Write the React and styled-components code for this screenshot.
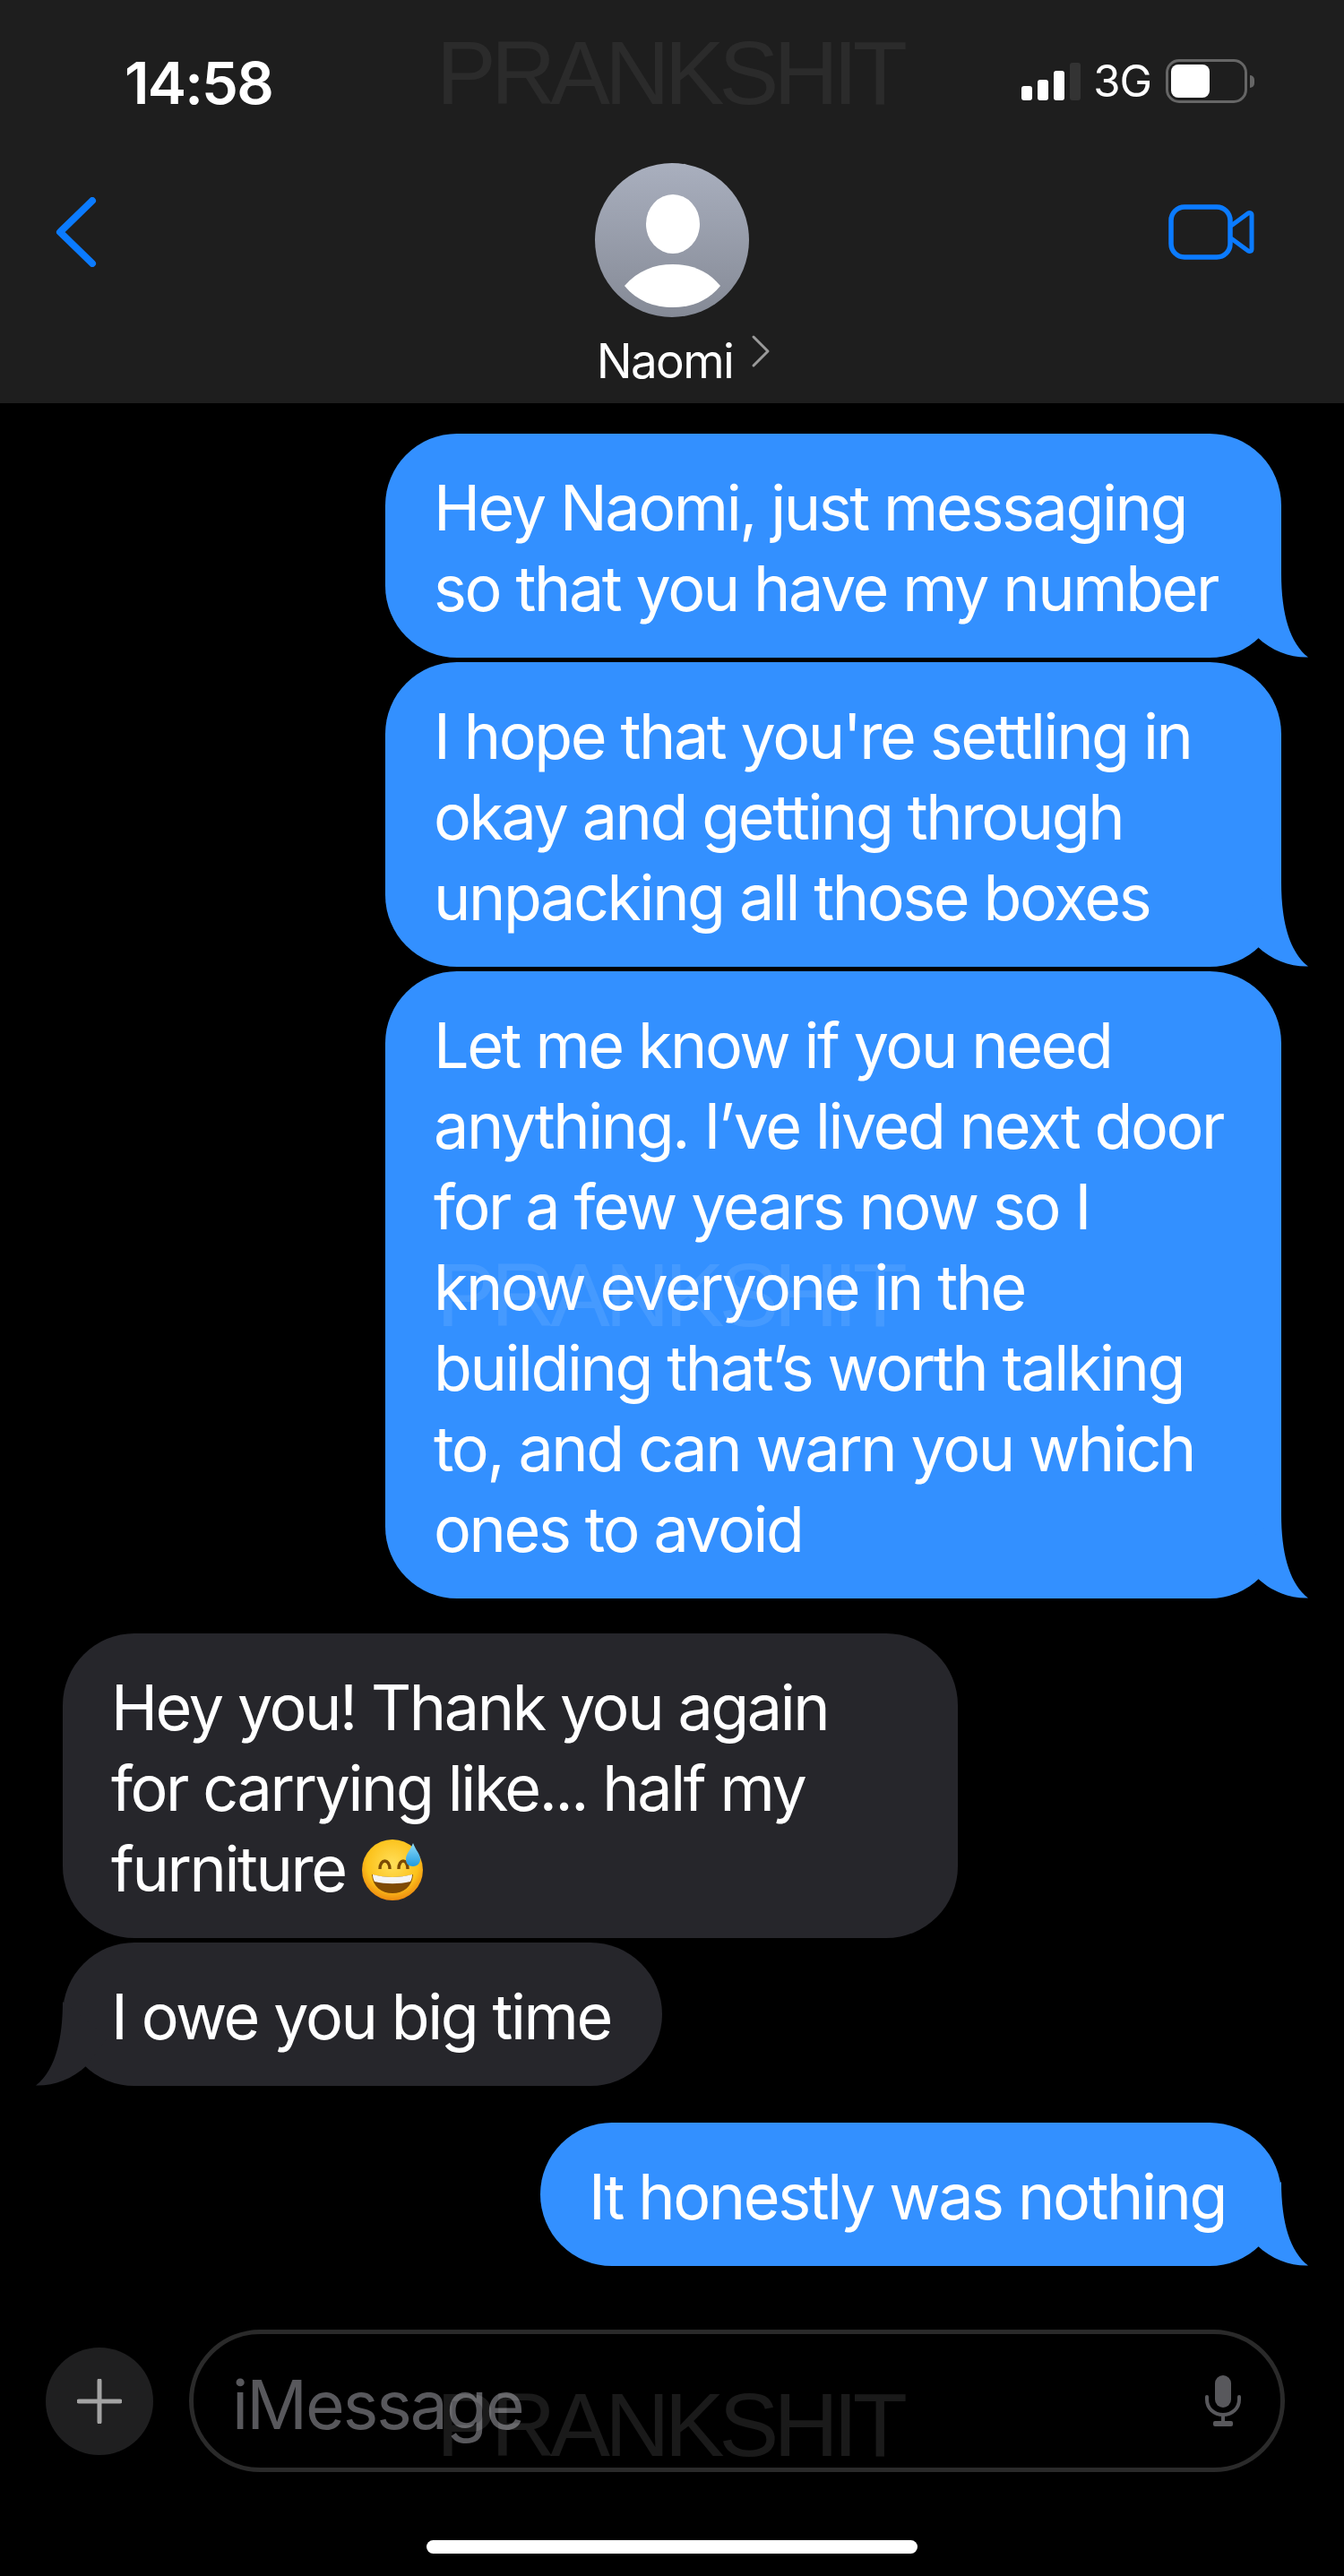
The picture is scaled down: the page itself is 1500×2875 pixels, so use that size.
import React from "react";
import styled, { createGlobalStyle } from "styled-components";

const SCGlobal = createGlobalStyle`
  html, body {
    margin: 0;
    padding: 0;
    background: #000;
  }
`;

const SCPhone = styled.div`
  position: relative;
  width: 1500px;
  height: 2875px;
  overflow: hidden;
  display: flex;
  flex-direction: column;
  background: #000;
  color: #fff;
  font-family: "Inter", "Liberation Sans", sans-serif;
`;

const SCHeader = styled.header`
  height: 450px;
  flex: none;
  box-sizing: border-box;
  background: #1e1e1e;
`;

const SCStatusRow = styled.div`
  display: flex;
  justify-content: space-between;
  align-items: center;
  height: 64px;
  padding: 60px 108px 0 139px;
`;

const SCTime = styled.span`
  font-size: 65px;
  font-weight: 600;
  letter-spacing: -1.8px;
`;

const SCStatusIcons = styled.div`
  display: flex;
  align-items: flex-end;
  margin-top: -3px;
`;

const SCSignal = styled.div`
  display: flex;
  align-items: flex-end;
  gap: 6px;
  height: 42px;
  margin-bottom: 3px;
`;

const SCSignalBar = styled.i`
  display: block;
  width: 12px;
  height: ${(p) => p.$height}px;
  border-radius: 3px;
  background: ${(p) => (p.$off ? "#333333" : "#ffffff")};
`;

const SCNetwork = styled.span`
  margin: 0 16px 0 14px;
  font-size: 49px;
  line-height: 48px;
  letter-spacing: -1px;
`;

const SCBattery = styled.div`
  position: relative;
  box-sizing: border-box;
  width: 91px;
  height: 49px;
  padding: 3px;
  border: 3px solid #666666;
  border-radius: 15px;

  &::after {
    content: "";
    position: absolute;
    right: -11px;
    top: 15px;
    width: 5px;
    height: 14px;
    border-radius: 0 7px 7px 0;
    background: #666666;
  }
`;

const SCBatteryFill = styled.div`
  width: 43px;
  height: 100%;
  border-radius: 8px;
  background: #fff;
`;

const SCNav = styled.nav`
  display: grid;
  grid-template-columns: 1fr auto 1fr;
  margin-top: 58px;
  padding: 0 100px 0 100px;
`;

const SCBack = styled.svg`
  display: block;
  margin: 38px 0 0 -38px;
`;

const SCVideo = styled.svg`
  display: block;
  justify-self: end;
  margin-top: 46px;
`;

const SCContact = styled.div`
  display: flex;
  flex-direction: column;
  align-items: center;
`;

const SCAvatar = styled.svg`
  display: block;
`;

const SCNameRow = styled.div`
  display: flex;
  align-items: flex-start;
  gap: 20px;
  margin: 17px 0 0 26px;
`;

const SCName = styled.span`
  font-size: 53px;
  line-height: 64px;
  letter-spacing: -1.6px;
`;

const SCNameChevron = styled.svg`
  display: block;
  margin-top: 2px;
`;

const SCThread = styled.main`
  display: flex;
  flex-direction: column;
  gap: 5px;
  padding-top: 34px;
`;

const SCBubble = styled.div`
  position: relative;
  box-sizing: border-box;
  align-self: ${(p) => (p.$sent ? "flex-end" : "flex-start")};
  width: ${(p) => p.$width}px;
  margin: ${(p) => p.$top || 0}px ${(p) => (p.$sent ? "70px" : "0")} 0
    ${(p) => (p.$sent ? "0" : "70px")};
  padding: 38px 54px 32px;
  border-radius: 80px;
  background: ${(p) => (p.$sent ? "#3390ff" : "#26262b")};
  font-size: 70px;
  line-height: 90px;
  letter-spacing: -2.4px;
  white-space: nowrap;
`;

const SCTail = styled.svg`
  position: absolute;
  bottom: 0;
  ${(p) => (p.$sent ? "right: -30px;" : "left: -30px; transform: scaleX(-1);")}
`;

const SCEmoji = styled.svg`
  display: inline-block;
  vertical-align: -10px;
  margin-left: 18px;
`;

const SCFooter = styled.footer`
  margin-top: auto;
  display: flex;
  flex-direction: column;
`;

const SCComposer = styled.div`
  display: flex;
  align-items: center;
  gap: 40px;
  padding-left: 51px;
`;

const SCPlus = styled.div`
  display: flex;
  align-items: center;
  justify-content: center;
  width: 120px;
  height: 120px;
  border-radius: 50%;
  background: #1f1f20;
  flex: none;
`;

const SCField = styled.div`
  display: flex;
  align-items: center;
  justify-content: space-between;
  box-sizing: border-box;
  width: 1223px;
  height: 159px;
  padding: 0 43px 0 43px;
  border: 5px solid #2a2a2a;
  border-radius: 80px;
`;

const SCPlaceholder = styled.span`
  padding-top: 8px;
  font-size: 75px;
  line-height: 90px;
  letter-spacing: -2px;
  color: #58585c;
`;

const SCHomeBar = styled.div`
  align-self: center;
  width: 548px;
  height: 15px;
  margin: 76px 0 25px;
  border-radius: 8px;
  background: #fff;
`;

const SCWatermarks = styled.div`
  position: absolute;
  inset: 0;
  pointer-events: none;
`;

const SCWatermark = styled.span`
  position: absolute;
  left: 487px;
  top: ${(p) => p.$top}px;
  font-family: "Liberation Sans", Arial, sans-serif;
  font-size: 100px;
  line-height: 100px;
  letter-spacing: -5.8px;
  color: rgba(255, 255, 255, ${(p) => p.$alpha});
`;

function Tail({ sent }) {
  return (
    <SCTail $sent={sent} width="80" height="94" viewBox="0 0 80 94">
      <path
        d="M50 0 C50 46 60 78 80 93.5 C60 94 40 87 23 71 L0 40 Z"
        fill={sent ? "#3390ff" : "#26262b"}
      />
    </SCTail>
  );
}

function Emoji() {
  return (
    <SCEmoji width="68" height="68" viewBox="0 0 68 68">
      <defs>
        <radialGradient id="face" cx="50%" cy="40%" r="60%">
          <stop offset="0%" stopColor="#ffdf5a" />
          <stop offset="70%" stopColor="#fcc21b" />
          <stop offset="100%" stopColor="#ee8b10" />
        </radialGradient>
        <linearGradient id="drop" x1="0" y1="0" x2="0" y2="1">
          <stop offset="0%" stopColor="#8fdcf8" />
          <stop offset="100%" stopColor="#1f9be0" />
        </linearGradient>
      </defs>
      <circle cx="34" cy="34" r="34" fill="url(#face)" />
      <path d="M20 33 C20 21 31 21 31 33" fill="none" stroke="#7a4a04" strokeWidth="3.4" />
      <path d="M41 33 C41 21 51 21 51 33" fill="none" stroke="#7a4a04" strokeWidth="3.4" />
      <path d="M11 39 C26 43 42 43 57 39 C56 53 46 60 34 60 C22 60 12 53 11 39Z" fill="#7f4a03" />
      <path d="M12 39 C26 43 42 43 56 39 C56 43 55 45 54 47 C41 50 27 50 14 47 C13 45 12 43 12 39Z" fill="#f4f4f4" />
      <path d="M57 4 C60 12 65 16 65 22 C65 27 61 30 57 30 C52 30 49 27 49 22 C49 16 54 12 57 4Z" fill="url(#drop)" />
    </SCEmoji>
  );
}

function App() {
  return (
    <SCPhone>
      <SCGlobal />
      <SCHeader>
        <SCStatusRow>
          <SCTime>14:58</SCTime>
          <SCStatusIcons>
            <SCSignal>
              <SCSignalBar $height={16} />
              <SCSignalBar $height={23} />
              <SCSignalBar $height={33} />
              <SCSignalBar $height={42} $off />
            </SCSignal>
            <SCNetwork>3G</SCNetwork>
            <SCBattery>
              <SCBatteryFill />
            </SCBattery>
          </SCStatusIcons>
        </SCStatusRow>
        <SCNav>
          <SCBack width="46" height="78" viewBox="0 0 46 78">
            <path
              d="M41 4 L5 39 L41 74"
              fill="none"
              stroke="#0b7bff"
              strokeWidth="8"
              strokeLinecap="round"
              strokeLinejoin="round"
            />
          </SCBack>
          <SCContact>
            <SCAvatar width="172" height="172" viewBox="0 0 172 172">
              <defs>
                <linearGradient id="avatarBg" x1="0" y1="0" x2="0" y2="1">
                  <stop offset="0%" stopColor="#a9afbe" />
                  <stop offset="100%" stopColor="#858a96" />
                </linearGradient>
              </defs>
              <circle cx="86" cy="86" r="86" fill="url(#avatarBg)" />
              <ellipse cx="87" cy="68" rx="30" ry="33" fill="#fff" />
              <path d="M33 137 C48 120 66 113 87 113 C108 113 126 120 140 137 C126 154 108 161 87 161 C66 161 47 154 33 137Z" fill="#fff" />
            </SCAvatar>
            <SCNameRow>
              <SCName>Naomi</SCName>
              <SCNameChevron width="22" height="38" viewBox="0 0 22 38">
                <path d="M3 3 L19 19 L3 35" fill="none" stroke="#9a9a9a" strokeWidth="3" strokeLinecap="round" strokeLinejoin="round" />
              </SCNameChevron>
            </SCNameRow>
          </SCContact>
          <SCVideo width="96" height="62" viewBox="0 0 96 62">
            <rect x="3" y="3" width="66" height="56" rx="15" fill="none" stroke="#0b7bff" strokeWidth="5.5" />
            <path d="M70 24 L89 10 C91 9 93 9.5 93 12 L93 50 C93 52.5 91 53 89 52 L70 38" fill="none" stroke="#0b7bff" strokeWidth="5" strokeLinejoin="round" />
          </SCVideo>
        </SCNav>
      </SCHeader>

      <SCThread>
        <SCBubble $sent $width={1000}>
          Hey Naomi, just messaging
          <br />
          so that you have my number
          <Tail sent />
        </SCBubble>
        <SCBubble $sent $width={1000}>
          I hope that you're settling in
          <br />
          okay and getting through
          <br />
          unpacking all those boxes
          <Tail sent />
        </SCBubble>
        <SCBubble $sent $width={1000}>
          Let me know if you need
          <br />
          anything. I’ve lived next door
          <br />
          for a few years now so I
          <br />
          know everyone in the
          <br />
          building that’s worth talking
          <br />
          to, and can warn you which
          <br />
          ones to avoid
          <Tail sent />
        </SCBubble>
        <SCBubble $width={999} $top={34}>
          Hey you! Thank you again
          <br />
          for carrying like... half my
          <br />
          furniture
          <Emoji />
        </SCBubble>
        <SCBubble $width={669}>
          I owe you big time
          <Tail />
        </SCBubble>
        <SCBubble $sent $width={827} $top={36}>
          It honestly was nothing
          <Tail sent />
        </SCBubble>
      </SCThread>

      <SCFooter>
        <SCComposer>
          <SCPlus>
            <svg width="50" height="50" viewBox="0 0 50 50">
              <path d="M25 2 V48 M2 25 H48" stroke="#a3a3a3" strokeWidth="5" strokeLinecap="round" />
            </svg>
          </SCPlus>
          <SCField>
            <SCPlaceholder>iMessage</SCPlaceholder>
            <svg width="42" height="58" viewBox="0 0 42 58">
              <rect x="12" y="0" width="18" height="36" rx="9" fill="#58585c" />
              <path d="M3 24 V27 C3 37 11 44 21 44 C31 44 39 37 39 27 V24" fill="none" stroke="#58585c" strokeWidth="4" strokeLinecap="round" />
              <path d="M21 44 V52" stroke="#58585c" strokeWidth="4" />
              <rect x="10" y="51" width="22" height="6" rx="2" fill="#58585c" />
            </svg>
          </SCField>
        </SCComposer>
        <SCHomeBar />
      </SCFooter>

      <SCWatermarks>
        <SCWatermark $top={31} $alpha={0.06}>PRANKSHIT</SCWatermark>
        <SCWatermark $top={1395} $alpha={0.09}>PRANKSHIT</SCWatermark>
        <SCWatermark $top={2656} $alpha={0.1}>PRANKSHIT</SCWatermark>
      </SCWatermarks>
    </SCPhone>
  );
}

export default App;
